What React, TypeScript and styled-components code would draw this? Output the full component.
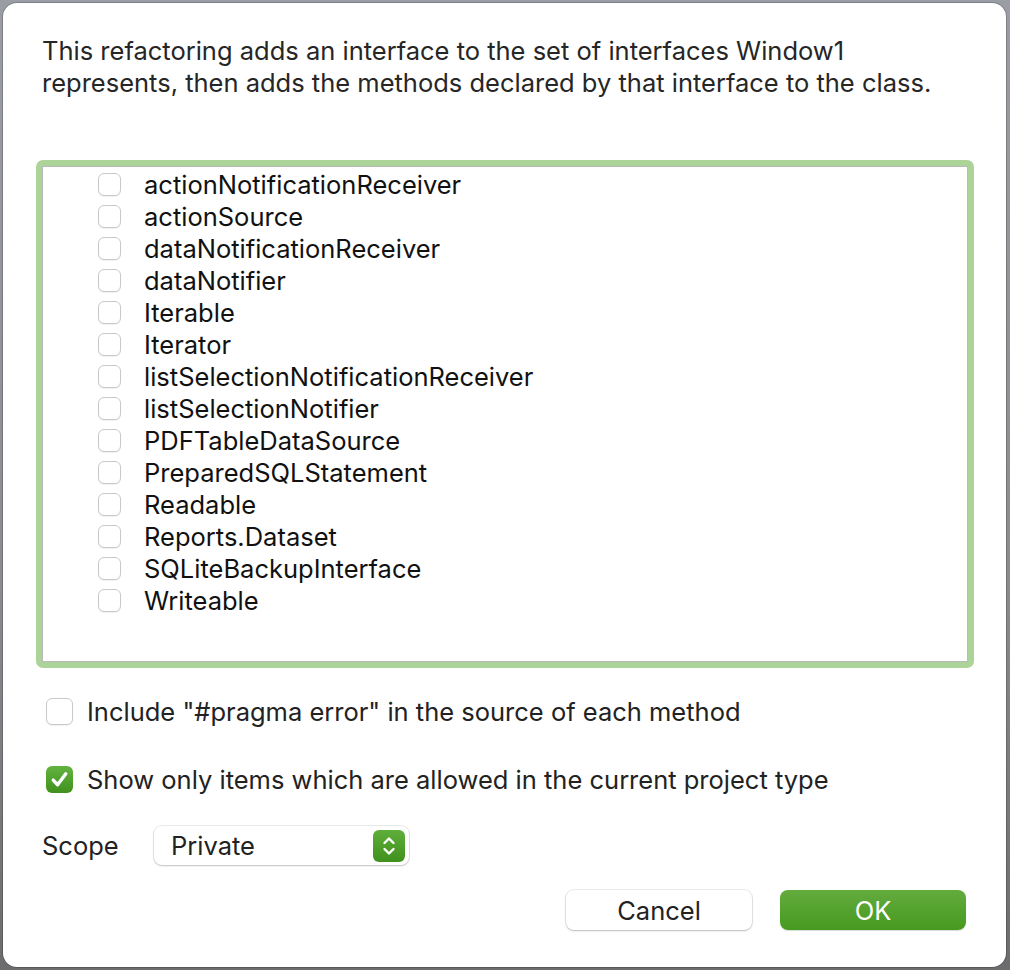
import React, { useState } from "react";
import styled, { createGlobalStyle } from "styled-components";

const GlobalStyle = createGlobalStyle`
  html, body {
    margin: 0;
    padding: 0;
  }
  body {
    width: 1010px;
    height: 970px;
    overflow: hidden;
    background: linear-gradient(180deg, #9a9da3 0%, #8a8c90 60%, #6c6c6e 100%);
    font-family: Inter, "Noto Sans", "Liberation Sans", sans-serif;
    color: #222;
  }
`;

const Dialog = styled.div`
  box-sizing: border-box;
  margin: 3px 0 0 3px;
  width: 1003px;
  height: 964px;
  background: #fff;
  border-radius: 14px;
  box-shadow: 0 0 0 1px rgba(0, 0, 0, 0.18);
  padding: 32px 40px 0 39px;
  display: flex;
  flex-direction: column;
`;

const Description = styled.p`
  margin: 0;
  font-size: 25.5px;
  line-height: 32px;
  color: #262626;
`;

const ListBox = styled.div`
  box-sizing: border-box;
  margin: 61px 0 0 -6px;
  width: 938px;
  height: 508px;
  border-radius: 7px;
  background: #acd398;
  padding: 6px;
`;

const ListInner = styled.div`
  box-sizing: border-box;
  height: 100%;
  background: #fff;
  border: 1px solid #b9b9b9;
  padding: 1px 0 0 55px;
`;

const ListRow = styled.label`
  display: flex;
  align-items: center;
  height: 32px;
  gap: 23px;
  font-size: 25.5px;
  color: #111;
`;

const Box = styled.span<{ $size: number; $checked?: boolean }>`
  box-sizing: border-box;
  flex: none;
  width: ${(p) => p.$size}px;
  height: ${(p) => p.$size}px;
  border-radius: 6px;
  display: flex;
  align-items: center;
  justify-content: center;
  background: ${(p) =>
    p.$checked ? "linear-gradient(180deg, #62b33f 0%, #3f901c 100%)" : "#fff"};
  border: ${(p) => (p.$checked ? "none" : "1px solid #c9c9c9")};
  box-shadow: ${(p) =>
    p.$checked ? "none" : "0 1px 1px rgba(0,0,0,0.06)"};
`;

const OptionRow = styled.label`
  display: flex;
  align-items: center;
  gap: 14px;
  margin-left: 4px;
  height: 32px;
  font-size: 25.5px;
  color: #222;
`;

const Options = styled.div`
  display: flex;
  flex-direction: column;
  gap: 36px;
  margin-top: 27px;
`;

const ScopeRow = styled.div`
  display: flex;
  align-items: center;
  margin-top: 31px;
  font-size: 25.5px;
`;

const ScopeLabel = styled.span`
  width: 112px;
  color: #222;
`;

const Select = styled.div`
  box-sizing: border-box;
  width: 255px;
  height: 39px;
  border-radius: 8px;
  background: #fff;
  box-shadow: 0 0 0 1px rgba(0, 0, 0, 0.08), 0 1px 2px rgba(0, 0, 0, 0.18);
  display: flex;
  align-items: center;
  justify-content: space-between;
  padding: 0 4px 0 17px;
  color: #222;
`;

const Stepper = styled.span`
  width: 32px;
  height: 32px;
  border-radius: 6px;
  background: linear-gradient(180deg, #5fae3b 0%, #3f901c 100%);
  display: flex;
  align-items: center;
  justify-content: center;
`;

const Buttons = styled.div`
  display: flex;
  justify-content: flex-end;
  gap: 28px;
  margin-top: 25px;
`;

const Button = styled.button<{ $primary?: boolean }>`
  width: 186px;
  height: 40px;
  border: none;
  border-radius: 8px;
  font-family: inherit;
  font-size: 25.5px;
  color: ${(p) => (p.$primary ? "#fff" : "#222")};
  background: ${(p) =>
    p.$primary ? "linear-gradient(180deg, #63ab3e 0%, #469a1f 100%)" : "#fff"};
  box-shadow: ${(p) =>
    p.$primary
      ? "0 1px 1px rgba(0,0,0,0.15)"
      : "0 0 0 1px rgba(0,0,0,0.08), 0 1px 2px rgba(0,0,0,0.2)"};
`;

const Check = () => (
  <svg width="21" height="21" viewBox="0 0 20 20">
    <path
      d="M4 10.5 L8.2 15 L16 4.5"
      fill="none"
      stroke="#fff"
      strokeWidth="3.2"
      strokeLinecap="round"
      strokeLinejoin="round"
    />
  </svg>
);

const Chevrons = () => (
  <svg width="16" height="24" viewBox="0 0 16 24">
    <path
      d="M3.5 9 L8 4.5 L12.5 9 M3.5 15 L8 19.5 L12.5 15"
      fill="none"
      stroke="#fff"
      strokeWidth="2.4"
      strokeLinecap="round"
      strokeLinejoin="round"
    />
  </svg>
);

const interfaces = [
  "actionNotificationReceiver",
  "actionSource",
  "dataNotificationReceiver",
  "dataNotifier",
  "Iterable",
  "Iterator",
  "listSelectionNotificationReceiver",
  "listSelectionNotifier",
  "PDFTableDataSource",
  "PreparedSQLStatement",
  "Readable",
  "Reports.Dataset",
  "SQLiteBackupInterface",
  "Writeable",
];

export default function App() {
  const [showAllowed] = useState(true);
  return (
    <>
      <GlobalStyle />
      <Dialog>
        <Description>
          This refactoring adds an interface to the set of interfaces Window1
          <br />
          represents, then adds the methods declared by that interface to the class.
        </Description>
        <ListBox>
          <ListInner>
            {interfaces.map((name) => (
              <ListRow key={name}>
                <Box $size={23} />
                {name}
              </ListRow>
            ))}
          </ListInner>
        </ListBox>
        <Options>
          <OptionRow>
            <Box $size={27} />
            Include "#pragma error" in the source of each method
          </OptionRow>
          <OptionRow>
            <Box $size={27} $checked={showAllowed}>
              <Check />
            </Box>
            Show only items which are allowed in the current project type
          </OptionRow>
        </Options>
        <ScopeRow>
          <ScopeLabel>Scope</ScopeLabel>
          <Select>
            Private
            <Stepper>
              <Chevrons />
            </Stepper>
          </Select>
        </ScopeRow>
        <Buttons>
          <Button>Cancel</Button>
          <Button $primary>OK</Button>
        </Buttons>
      </Dialog>
    </>
  );
}
